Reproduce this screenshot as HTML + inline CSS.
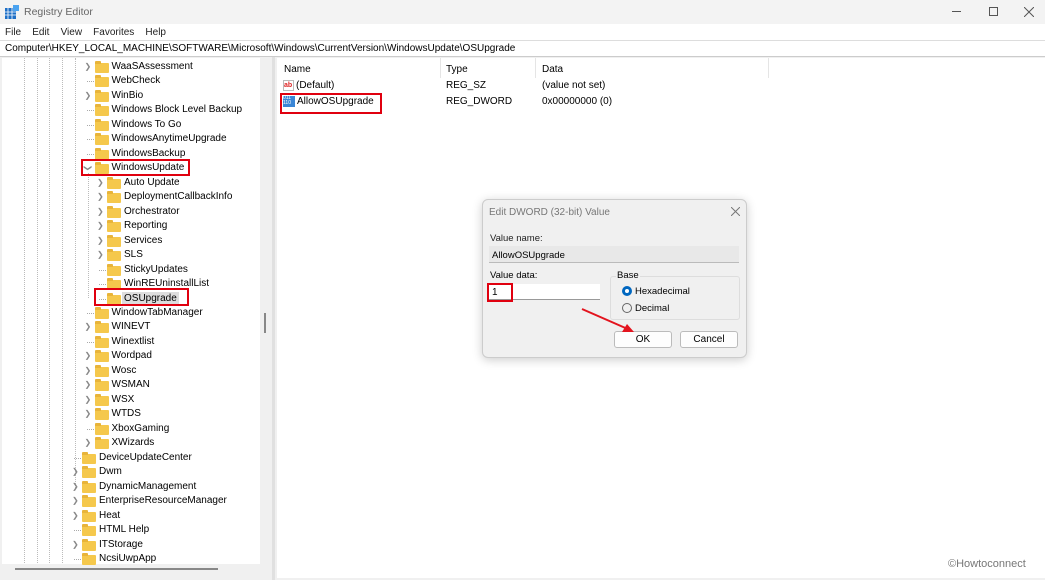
<!DOCTYPE html>
<html><head><meta charset="utf-8"><style>
*{margin:0;padding:0;box-sizing:border-box}
body{width:1045px;height:580px;overflow:hidden;background:#fff;font-family:"Liberation Sans",sans-serif;font-size:10px;color:#000;position:relative}
.a{position:absolute}
.row{position:absolute;height:14px;line-height:14px;white-space:nowrap;font-size:10px}
.fold{position:absolute;width:14px;height:10px;background:#f5c84c;border-radius:1px;top:3px}
.fold:before{content:"";position:absolute;left:0;top:-2px;width:6px;height:3px;background:#e8b43a;border-radius:1px 1px 0 0}
.chev{position:absolute;top:0;font-size:8px;color:#888}
.vl{position:absolute;border-left:1px dotted #bbb;top:58px;height:505px}
.red{position:absolute;border:2px solid #e0000f}
</style></head><body>
<div class="a" style="left:0;top:0;width:1045px;height:24px;background:#f3f3f3"></div>
<svg class="a" style="left:5px;top:5px" width="14" height="14"><rect x="0" y="3" width="11" height="11" fill="#1e6fc6"/><rect x="8" y="0" width="6" height="6" fill="#4aa3f0"/><path d="M3 3v11M7 3v11M0 7h11M0 10h11" stroke="#fff" stroke-width="0.8"/></svg>
<div class="a" style="left:24px;top:6px;font-size:10.5px;color:#666">Registry Editor</div>
<div class="a" style="left:952px;top:11px;width:9px;border-top:1px solid #555"></div>
<div class="a" style="left:989px;top:7px;width:9px;height:9px;border:1px solid #555"></div>
<svg class="a" style="left:1024px;top:7px" width="10" height="10"><path d="M0 0L10 10M10 0L0 10" stroke="#555" stroke-width="1"/></svg>
<div class="a" style="left:5px;top:27px;font-size:10px;color:#222;word-spacing:0">File&nbsp;&nbsp;&nbsp; Edit&nbsp;&nbsp;&nbsp; View&nbsp;&nbsp;&nbsp; Favorites&nbsp;&nbsp;&nbsp; Help</div>
<div class="a" style="left:0;top:40px;width:1045px;height:17px;border-top:1px solid #ddd;border-bottom:1px solid #ccc"></div>
<div class="a" style="left:5px;top:43px;font-size:10px">Computer\HKEY_LOCAL_MACHINE\SOFTWARE\Microsoft\Windows\CurrentVersion\WindowsUpdate\OSUpgrade</div>
<div class="a" style="left:0;top:57px;width:1045px;height:523px;background:#f0f0f0"></div>
<div class="a" style="left:2px;top:58px;width:258px;height:506px;background:#fff"></div>
<div class="a" style="left:2px;top:564px;width:270px;height:14px;background:#f0f0f0"></div>
<div class="a" style="left:15px;top:568px;width:203px;border-top:2px solid #888"></div>
<div class="a" style="left:264px;top:313px;height:20px;border-left:2px solid #888"></div>
<div class="a" style="left:272px;top:57px;width:3px;height:523px;background:#e0e0e0"></div>
<div class="a" style="left:277px;top:58px;width:768px;height:520px;background:#fff"></div>
<div class="vl" style="left:24px"></div><div class="vl" style="left:37px"></div><div class="vl" style="left:49px"></div><div class="vl" style="left:62px"></div>
<div class="vl" style="left:75px;top:58px;height:430px"></div>
<div class="vl" style="left:88px;top:173px;height:125px"></div>
<div id="tree"></div>
<script>
var r=[["WaaSAssessment",1,1],["WebCheck",1,0],["WinBio",1,1],["Windows Block Level Backup",1,0],["Windows To Go",1,0],["WindowsAnytimeUpgrade",1,0],["WindowsBackup",1,0],["WindowsUpdate",1,2],["Auto Update",2,1],["DeploymentCallbackInfo",2,1],["Orchestrator",2,1],["Reporting",2,1],["Services",2,1],["SLS",2,1],["StickyUpdates",2,0],["WinREUninstallList",2,0],["OSUpgrade",2,0],["WindowTabManager",1,0],["WINEVT",1,1],["Winextlist",1,0],["Wordpad",1,1],["Wosc",1,1],["WSMAN",1,1],["WSX",1,1],["WTDS",1,1],["XboxGaming",1,0],["XWizards",1,1],["DeviceUpdateCenter",0,0],["Dwm",0,1],["DynamicManagement",0,1],["EnterpriseResourceManager",0,1],["Heat",0,1],["HTML Help",0,0],["ITStorage",0,1],["NcsiUwpApp",0,0]];
var h="";r.forEach(function(e,i){var t=60+i*14.47;var fx=82+e[1]*12.5;
h+='<div class="row" style="top:'+t+'px;left:0;width:260px">';
if(e[2]==1)h+='<span class="chev" style="left:'+(fx-10)+'px">&#x276F;</span>';
else if(e[2]==2)h+='<span class="chev" style="left:'+(fx-11)+'px;transform:rotate(90deg)">&#x276F;</span>';
else h+='<span class="a" style="left:'+(fx-8)+'px;top:7px;width:7px;border-top:1px dotted #aaa"></span>';
h+='<span class="fold" style="left:'+fx+'px"></span>';
var bg=e[0]=="OSUpgrade"?"background:#ddd;padding:0 2px;margin-left:-2px;":"";
h+='<span class="a" style="left:'+(fx+17)+'px;top:0;'+bg+'">'+e[0]+'</span></div>';});
document.getElementById("tree").innerHTML=h;
</script>
<div class="red" style="left:81px;top:159px;width:109px;height:17px"></div>
<div class="red" style="left:94px;top:288px;width:95px;height:18px"></div>
<div class="a" style="left:284px;top:64px">Name</div>
<div class="a" style="left:440px;top:58px;height:20px;border-left:1px solid #e5e5e5"></div>
<div class="a" style="left:446px;top:64px">Type</div>
<div class="a" style="left:535px;top:58px;height:20px;border-left:1px solid #e5e5e5"></div>
<div class="a" style="left:542px;top:64px">Data</div>
<div class="a" style="left:768px;top:58px;height:20px;border-left:1px solid #e5e5e5"></div>
<div class="a" style="left:283px;top:80px;width:11px;height:11px;border:1px solid #bbb;font-size:7px;color:#d22;line-height:9px;font-weight:bold">ab</div>
<div class="a" style="left:296px;top:80px">(Default)</div>
<div class="a" style="left:446px;top:80px">REG_SZ</div>
<div class="a" style="left:542px;top:80px">(value not set)</div>
<div class="a" style="left:283px;top:96px;width:12px;height:11px;background:#3a86d6;font-size:5px;color:#fff;line-height:5px">011<br>110</div>
<div class="a" style="left:297px;top:96px">AllowOSUpgrade</div>
<div class="a" style="left:446px;top:96px">REG_DWORD</div>
<div class="a" style="left:542px;top:96px">0x00000000 (0)</div>
<div class="red" style="left:280px;top:93px;width:102px;height:21px"></div>
<div class="a" style="left:482px;top:199px;width:265px;height:159px;background:#f0f0f0;border:1px solid #ccc;border-radius:6px;box-shadow:0 2px 10px rgba(0,0,0,.2)"></div>
<div class="a" style="left:489px;top:207px;color:#777">Edit DWORD (32-bit) Value</div>
<svg class="a" style="left:731px;top:207px" width="9" height="9"><path d="M0 0L9 9M9 0L0 9" stroke="#777" stroke-width="1"/></svg>
<div class="a" style="left:490px;top:233px;color:#222;font-size:9.5px">Value name:</div>
<div class="a" style="left:489px;top:246px;width:250px;height:17px;background:#e8e8e8;border-bottom:1px solid #bbb"></div>
<div class="a" style="left:492px;top:250px;font-size:9.5px">AllowOSUpgrade</div>
<div class="a" style="left:490px;top:270px;font-size:9.5px">Value data:</div>
<div class="a" style="left:489px;top:284px;width:111px;height:16px;background:#fff;border-bottom:1px solid #999"></div>
<div class="a" style="left:492px;top:287px">1</div>
<div class="red" style="left:487px;top:283px;width:26px;height:19px"></div>
<div class="a" style="left:610px;top:276px;width:130px;height:44px;border:1px solid #ddd;border-radius:3px"></div>
<div class="a" style="left:616px;top:270px;background:#f0f0f0;padding:0 1px;font-size:9.5px">Base</div>
<div class="a" style="left:622px;top:286px;width:10px;height:10px;border-radius:50%;background:#0067c0"></div>
<div class="a" style="left:625px;top:289px;width:4px;height:4px;border-radius:50%;background:#fff"></div>
<div class="a" style="left:635px;top:286px;font-size:9.5px">Hexadecimal</div>
<div class="a" style="left:622px;top:303px;width:10px;height:10px;border-radius:50%;border:1px solid #666"></div>
<div class="a" style="left:635px;top:303px;font-size:9.5px">Decimal</div>
<div class="a" style="left:614px;top:331px;width:58px;height:17px;background:#fdfdfd;border:1px solid #bbb;border-radius:3px;text-align:center;line-height:15px">OK</div>
<div class="a" style="left:680px;top:331px;width:58px;height:17px;background:#fdfdfd;border:1px solid #bbb;border-radius:3px;text-align:center;line-height:15px">Cancel</div>
<svg class="a" style="left:578px;top:305px" width="60" height="30"><line x1="4" y1="4" x2="52" y2="25" stroke="#e3141e" stroke-width="2"/><path d="M56 27 L44 27 L49 19 Z" fill="#e3141e"/></svg>
<div class="a" style="left:948px;top:558px;color:#777;font-size:11px">©Howtoconnect</div>
</body></html>
